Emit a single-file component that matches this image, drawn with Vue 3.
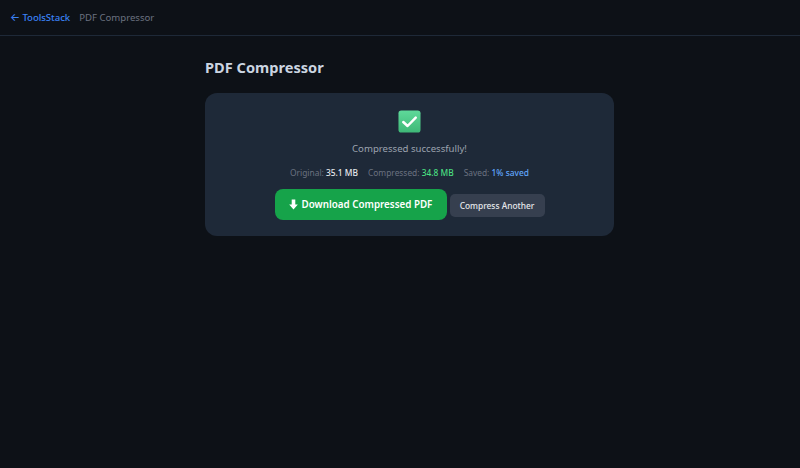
<script setup>
const stats = [
  { label: 'Original:', value: '35.1 MB', tone: 'white' },
  { label: 'Compressed:', value: '34.8 MB', tone: 'green' },
  { label: 'Saved:', value: '1% saved', tone: 'blue' },
]
</script>

<template>
  <div class="page">
    <header class="top">
      <a class="back"><span class="arrow">←</span> ToolsStack</a>
      <span class="crumb">PDF Compressor</span>
    </header>
    <main class="main">
      <h1 class="title">PDF Compressor</h1>
      <section class="card">
        <svg class="check" viewBox="0 0 24 24" width="23" height="23">
          <defs>
            <linearGradient id="chk" x1="0" y1="0" x2="0" y2="1">
              <stop offset="0" stop-color="#5ed99a" />
              <stop offset="1" stop-color="#3fb877" />
            </linearGradient>
          </defs>
          <rect x="0.5" y="0.5" width="23" height="23" rx="3" fill="url(#chk)" />
          <path d="M5.5 12.5l4.5 4.2 8.5-8.7" fill="none" stroke="#fff" stroke-width="2.6" stroke-linecap="round" stroke-linejoin="round" />
        </svg>
        <p class="msg">Compressed successfully!</p>
        <div class="stats">
          <span v-for="s in stats" :key="s.label">{{ s.label }} <b :class="s.tone">{{ s.value }}</b></span>
        </div>
        <div class="actions">
          <button class="primary">
            <svg viewBox="0 0 10 12" width="9" height="11"><path d="M3 0.5h4v5.6h2.8L5 11.5 0.2 6.1H3z" fill="#fff" /></svg>
            Download Compressed PDF
          </button>
          <button class="secondary">Compress Another</button>
        </div>
      </section>
    </main>
  </div>
</template>

<style>
html, body { margin: 0; background: #0d1117; }
</style>

<style scoped>
.page {
  min-height: 468px;
  background: #0d1117;
  font-family: "Noto Sans", "Open Sans", sans-serif;
  color: #e5e7eb;
}
.top {
  height: 35px;
  border-bottom: 1px solid #1e2938;
  display: flex;
  align-items: center;
  gap: 9px;
  padding-left: 10px;
  font-size: 9.6px;
}
.back { color: #3b82f6; font-weight: 500; letter-spacing: -0.05px; }
.arrow { font-family: Inter, sans-serif; font-size: 10.5px; }
.crumb { color: #6b7280; }
.main { width: 409px; margin-left: 205px; padding-top: 22px; }
.title { margin: 0 0 16px; font-size: 14.6px; line-height: 19px; font-weight: 700; color: #cbd5e1; }
.card {
  background: #1e2938;
  border-radius: 12px;
  height: 143px;
  box-sizing: border-box;
  padding-top: 17px;
  display: flex;
  flex-direction: column;
  align-items: center;
}
.check { display: block; }
.msg { margin: 9px 0 0; font-size: 9.6px; line-height: 14px; color: #9ca3af; }
.stats { margin-top: 11px; display: flex; gap: 10px; font-size: 8.4px; line-height: 12px; color: #6b7280; }
.stats b { font-weight: 500; }
.white { color: #e5e7eb; }
.green { color: #4ade80; }
.blue { color: #60a5fa; }
.actions { margin-top: 10px; display: flex; align-items: flex-start; gap: 3px; }
button { border: 0; font-family: inherit; padding: 0; display: flex; align-items: center; justify-content: center; }
.primary {
  width: 172px; height: 31px; border-radius: 8px; background: #16a34a; color: #fff;
  font-size: 9.8px; font-weight: 600; gap: 4px;
}
.secondary {
  width: 95px; height: 23px; margin-top: 5px; border-radius: 5px; background: #363f4f; color: #e5e7eb;
  font-size: 8.4px; font-weight: 500;
}
</style>
